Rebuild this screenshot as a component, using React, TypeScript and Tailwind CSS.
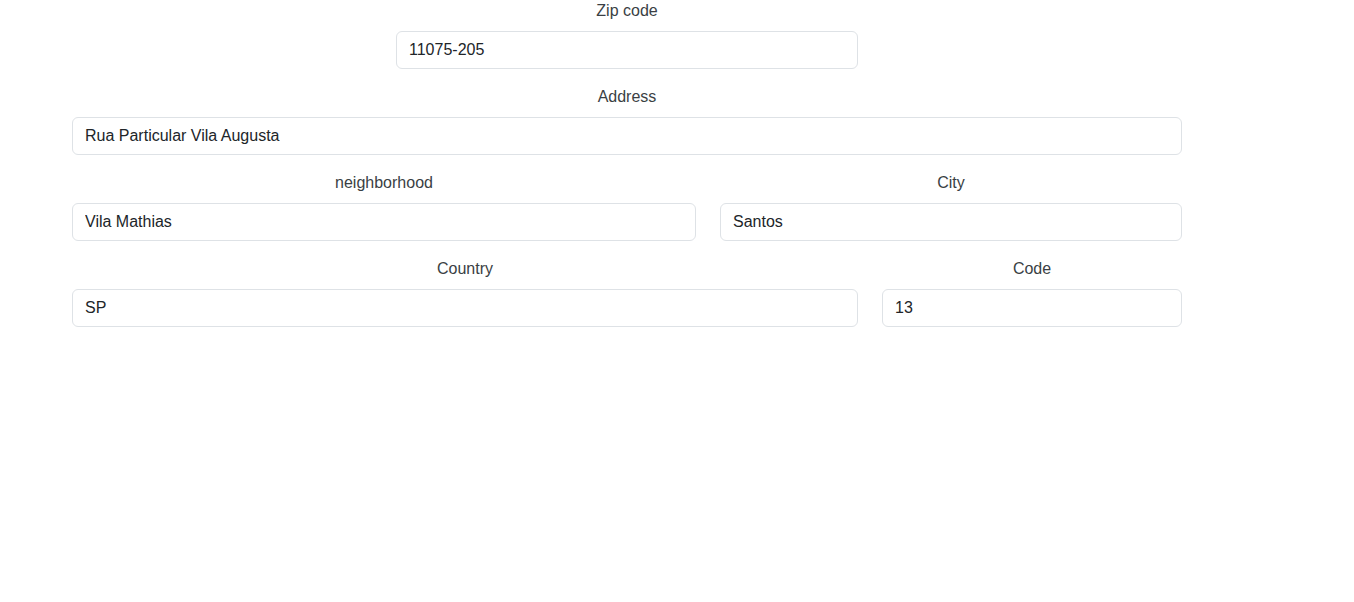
const fields = [
    [{ label: 'Zip code', value: '11075-205', w: 'w-[462px] mx-auto' }],
    [{ label: 'Address', value: 'Rua Particular Vila Augusta', w: 'w-full' }],
    [
        { label: 'neighborhood', value: 'Vila Mathias', w: 'w-[624px]' },
        { label: 'City', value: 'Santos', w: 'w-[462px]' },
    ],
    [
        { label: 'Country', value: 'SP', w: 'w-[786px]' },
        { label: 'Code', value: '13', w: 'w-[300px]' },
    ],
];

export default function App() {
    return (
        <div className="min-h-[602px] bg-white font-['Liberation_Sans',Arial,sans-serif] text-base">
            <div className="ml-[72px] w-[1110px] -mt-px">
                {fields.map((row, i) => (
                    <div key={i} className="flex gap-6 mb-4">
                        {row.map((f) => (
                            <div key={f.label} className={f.w}>
                                <label className="block text-center leading-6 mb-2 text-[#3a3f44]">{f.label}</label>
                                <input
                                    type="text"
                                    defaultValue={f.value}
                                    className="block w-full h-[38px] px-3 rounded-md border border-[#dee2e6] bg-white text-[#212529] focus:outline-none"
                                />
                            </div>
                        ))}
                    </div>
                ))}
            </div>
        </div>
    );
}
